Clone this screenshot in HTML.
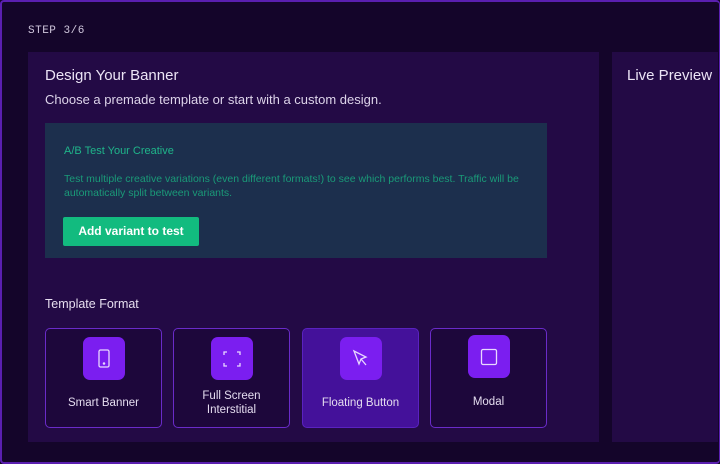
<!DOCTYPE html>
<html><head><style>
*{margin:0;padding:0;box-sizing:border-box}
body{width:720px;height:464px;overflow:hidden;background:#14052a;font-family:"Liberation Sans",sans-serif;position:relative}
.frame{position:absolute;inset:0;border:2px solid #5a1fb0;border-right:1px solid #5a1fb0;border-radius:4px}
.step{position:absolute;left:28px;top:25px;font-family:"Liberation Mono",monospace;font-size:11px;color:#cfc6dc;letter-spacing:0.5px}
.panel{position:absolute;top:52px;height:390px;background:#230a45}
h1{position:absolute;font-size:15px;font-weight:normal;color:#ece4f6}
.sub{position:absolute;left:45px;top:92px;font-size:13px;color:#ddd4ea}
.ab{position:absolute;left:45px;top:123px;width:502px;height:135px;background:#1c2f4d}
.ab .t{position:absolute;left:19px;top:22px;font-size:11px;color:#1fb58a}
.ab .d{position:absolute;left:19px;top:49px;width:480px;font-size:10.5px;line-height:14px;color:#1a9a78}
.btn{position:absolute;left:18px;top:94px;width:136px;height:29px;background:#12bb7f;border-radius:2px;color:#fff;font-size:12px;font-weight:bold;text-align:center;line-height:29px}
.tf{position:absolute;left:45px;top:297px;font-size:12.5px;color:#e6deef}
.card{position:absolute;top:328px;width:117px;height:100px;border:1px solid #6a2bc9;border-radius:5px;background:#1d073b;text-align:center;color:#e4dcef;font-size:11.5px}
.card.sel{background:#44119a;border-color:#5a22c0}
.ic{position:absolute;left:37px;top:8px;width:42px;height:43px;background:#7b1ef0;border-radius:7px;display:flex;align-items:center;justify-content:center}
.lbl{position:absolute;left:0;right:0;top:67px;line-height:14px}
</style></head><body>
<div class="frame"></div>
<div class="step">STEP 3/6</div>
<div class="panel" style="left:28px;width:571px"></div>
<div class="panel" style="left:612px;width:106px"></div>
<h1 style="left:45px;top:67px">Design Your Banner</h1>
<h1 style="left:627px;top:67px">Live Preview</h1>
<div class="sub">Choose a premade template or start with a custom design.</div>
<div class="ab"><div class="t">A/B Test Your Creative</div>
<div class="d">Test multiple creative variations (even different formats!) to see which performs best. Traffic will be automatically split between variants.</div>
<div class="btn">Add variant to test</div></div>
<div class="tf">Template Format</div>
<div class="card" style="left:45px"><div class="ic"><svg width="20" height="22" viewBox="0 0 20 22" fill="none" stroke="#e8d8ff" stroke-width="1.3"><rect x="5" y="2" width="10" height="17" rx="1.5"/><circle cx="10" cy="15.5" r="0.6" fill="#e8d8ff"/></svg></div><div class="lbl" style="top:67px">Smart Banner</div></div>
<div class="card" style="left:173px"><div class="ic"><svg width="20" height="20" viewBox="0 0 20 20" fill="none" stroke="#e8d8ff" stroke-width="1.3"><path d="M2 6V3h3M15 3h3v3M18 14v3h-3M5 17H2v-3"/></svg></div><div class="lbl" style="top:60px">Full Screen<br>Interstitial</div></div>
<div class="card sel" style="left:302px"><div class="ic"><svg width="20" height="20" viewBox="0 0 20 20" fill="none" stroke="#e8d8ff" stroke-width="1.3"><path d="M3 2l5 13 2-5 5-2zM10 10l5 6"/></svg></div><div class="lbl">Floating Button</div></div>
<div class="card" style="left:430px"><div class="ic" style="top:6px"><svg width="20" height="20" viewBox="0 0 20 20" fill="none" stroke="#e8d8ff" stroke-width="1.3"><rect x="2.5" y="2.5" width="15" height="15" rx="1.5"/></svg></div><div class="lbl" style="top:66px">Modal</div></div>
</body></html>
